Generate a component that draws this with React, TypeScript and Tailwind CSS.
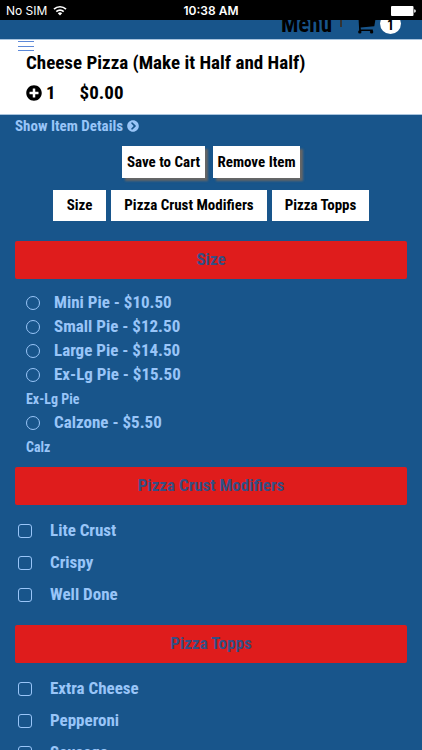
import { FaChevronCircleRight, FaPlusCircle } from 'react-icons/fa';

const sizes = [
  { name: 'Mini Pie', price: '$10.50' },
  { name: 'Small Pie', price: '$12.50' },
  { name: 'Large Pie', price: '$14.50' },
  { name: 'Ex-Lg Pie', price: '$15.50', note: 'Ex-Lg Pie' },
  { name: 'Calzone', price: '$5.50', note: 'Calz' },
];

const crusts = ['Lite Crust', 'Crispy', 'Well Done'];
const toppings = ['Extra Cheese', 'Pepperoni', 'Sausage'];

function StatusBar() {
  return (
    <div className="fixed inset-x-0 top-0 z-10 flex h-5 items-center bg-black px-[6px] pt-px font-['Inter','Liberation_Sans',sans-serif] text-[12px] font-normal text-white">
      <div className="flex flex-1 items-center gap-[6px]">
        <span>No SIM</span>
        <svg viewBox="0 0 14 11" className="h-[11px] w-[14px]" fill="none" stroke="currentColor" strokeWidth="1.7">
          <path d="M1 4.2a8.6 8.6 0 0 1 12 0" />
          <path d="M3.3 6.7a5.3 5.3 0 0 1 7.4 0" />
          <path d="M7 10.6 4.8 8.3a3.2 3.2 0 0 1 4.4 0z" fill="currentColor" stroke="none" />
        </svg>
      </div>
      <span className="font-semibold">10:38 AM</span>
      <div className="flex flex-1 justify-end">
        <svg viewBox="0 0 25 10" className="h-[10px] w-[25px]" fill="currentColor">
          <rect width="22.5" height="10" rx="1" />
          <path d="M23.2 3.2q1.6 0 1.6 1.8t-1.6 1.8z" />
        </svg>
      </div>
    </div>
  );
}

function CartIcon() {
  return (
    <svg viewBox="0 0 20 22" className="h-[22px] w-5" fill="currentColor">
      <path d="M0 2h3.6l.5 2H20l-1.7 10.2L4.6 15.4l.3 2.2h11.9v1.4H3.2L2.4 3.6H0z" />
      <circle cx="3.8" cy="19.9" r="1.7" />
      <circle cx="15.6" cy="19.9" r="1.7" />
    </svg>
  );
}

function SectionTitle({ children }: { children: string }) {
  return (
    <h2 className="flex h-[38px] items-center justify-center rounded-[2px] bg-[#df1c1c] text-[#364e83]">
      {children}
    </h2>
  );
}

function CheckList({ items }: { items: string[] }) {
  return (
    <ul className="pt-[10px] pb-[14px] pl-[3px]">
      {items.map((item) => (
        <li key={item}>
          <label className="flex h-8 items-center gap-[18px]">
            <input
              type="checkbox"
              className="size-[14px] appearance-none rounded-[3px] border border-[#99c5f8] checked:bg-[#99c5f8]"
            />
            {item}
          </label>
        </li>
      ))}
    </ul>
  );
}

export default function App() {
  return (
    <div className="flex h-screen flex-col overflow-hidden bg-[#18558b] font-['Roboto_Condensed','Liberation_Sans_Narrow','Liberation_Sans',sans-serif] font-bold text-[#99c5f8]">
      <StatusBar />

      <nav className="flex h-[39px] shrink-0 items-end justify-end pr-[21px] text-black">
        <a href="#menu" className="text-[23px] leading-7">
          Menu
        </a>
        <span className="mr-[14px] mb-3 ml-2 h-4 w-[2px] bg-[#333]" />
        <a href="#cart" className="flex items-end gap-1 pb-[5px]">
          <CartIcon />
          <span className="flex size-[21px] items-center justify-center rounded-full bg-white pt-1 text-[14px]">
            1
          </span>
        </a>
      </nav>

      <header className="h-[76px] shrink-0 border-y border-[#a9c4de] bg-white text-[19px] leading-6 text-black">
        <button aria-label="Open menu" className="mt-[1px] ml-[18px] flex h-[10px] w-4 flex-col justify-between">
          <span className="h-px w-full bg-[#5c88d8]" />
          <span className="h-px w-full bg-[#5c88d8]" />
          <span className="h-px w-full bg-[#5c88d8]" />
        </button>
        <h1 className="pl-[26px]">Cheese Pizza (Make it Half and Half)</h1>
        <div className="mt-[6px] flex items-center pl-[26px]">
          <button aria-label="Add one">
            <FaPlusCircle className="size-4" />
          </button>
          <span className="ml-1">1</span>
          <span className="ml-6">$0.00</span>
        </div>
      </header>

      <main className="px-[15px]">
        <a href="#details" className="flex h-[22px] w-fit items-center gap-1 text-[15px]">
          Show Item Details
          <FaChevronCircleRight className="size-3" />
        </a>

        <div className="mt-[9px] flex justify-center gap-2 text-[15px] text-black">
          <button className="h-8 w-[83px] bg-white shadow-[3px_3px_2px_#666]">Save to Cart</button>
          <button className="h-8 w-[87px] bg-white shadow-[3px_3px_2px_#666]">Remove Item</button>
        </div>
        <div className="mt-3 flex justify-center gap-[5px] text-[15px] text-black">
          <button className="h-[31px] w-[53px] bg-white">Size</button>
          <button className="h-[31px] w-[156px] bg-white">Pizza Crust Modifiers</button>
          <button className="h-[31px] w-[97px] bg-white">Pizza Topps</button>
        </div>

        <div className="mt-5 text-[17px]">
          <SectionTitle>Size</SectionTitle>
          <ul className="pt-3 pb-2 pl-[11px]">
            {sizes.map((size) => (
              <li key={size.name}>
                <label className="flex h-6 items-center gap-[14px]">
                  <input
                    type="radio"
                    name="size"
                    className="size-[14px] appearance-none rounded-full border border-[#99c5f8] checked:bg-[#99c5f8]"
                  />
                  {size.name} - {size.price}
                </label>
                {size.note && <p className="text-[14px] leading-6">{size.note}</p>}
              </li>
            ))}
          </ul>

          <SectionTitle>Pizza Crust Modifiers</SectionTitle>
          <CheckList items={crusts} />

          <SectionTitle>Pizza Topps</SectionTitle>
          <CheckList items={toppings} />
        </div>
      </main>
    </div>
  );
}
